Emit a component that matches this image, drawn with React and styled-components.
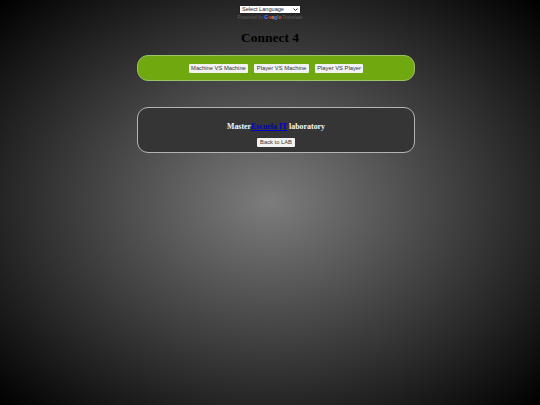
import React from 'react';
import styled, { createGlobalStyle } from 'styled-components';

const GlobalStyle = createGlobalStyle`
    html, body {
        margin: 0;
        padding: 0;
        height: 100%;
    }
    #root {
        height: 100%;
    }
`;

const Page = styled.div`
    width: 540px;
    height: 405px;
    overflow: hidden;
    display: flex;
    flex-direction: column;
    align-items: center;
    padding-top: 5px;
    box-sizing: border-box;
    background: radial-gradient(#7c7c7c, #000);
    font-family: "Liberation Serif", serif;
`;

const Translate = styled.div`
    display: flex;
    flex-direction: column;
    align-items: center;
`;

const LanguageSelect = styled.select`
    appearance: none;
    width: 62px;
    height: 9px;
    padding: 0 0 0 2px;
    border: 1px solid #222;
    border-radius: 0;
    background: #fff url("data:image/svg+xml,%3Csvg xmlns='http://www.w3.org/2000/svg' width='5' height='3'%3E%3Cpath d='M0.5 0.5L2.5 2.5L4.5 0.5' fill='none' stroke='%23222' stroke-width='1'/%3E%3C/svg%3E") no-repeat right 2px center;
    color: #222;
    font-family: "Liberation Sans", sans-serif;
    font-size: 5.6px;
    line-height: 7px;
`;

const Powered = styled.div`
    margin-top: 0;
    height: 6px;
    display: flex;
    align-items: center;
    gap: 1px;
    font-family: "Liberation Sans", sans-serif;
    font-size: 4.9px;
    color: #5c5c5c;
    white-space: nowrap;
`;

const GoogleLetter = styled.span`
    color: ${props => props.color};
    font-weight: bold;
    font-size: 4.9px;
`;

const Title = styled.h1`
    margin: 10px 0 0;
    font-size: 13.5px;
    line-height: 16px;
    font-weight: bold;
    color: #000;
`;

const Panel = styled.div`
    width: 278px;
    margin-left: 12px;
    box-sizing: border-box;
    border: 1px solid ${props => props.$green ? '#9cc26a' : '#b4b4b4'};
    border-radius: 11px;
    background: ${props => props.$green ? '#70a90f' : '#353535'};
    display: flex;
    flex-direction: column;
    align-items: center;
`;

const GamePanel = styled(Panel)`
    margin-top: 9px;
    height: 26px;
    flex-direction: row;
    justify-content: center;
    gap: 6px;
`;

const LabPanel = styled(Panel)`
    margin-top: 26px;
    height: 46px;
    padding-top: 13px;
`;

const Button = styled.button`
    height: 9px;
    padding: 0 2.5px;
    border: none;
    border-radius: 1px;
    background: #f2f2f2;
    color: #333;
    font-family: "Liberation Sans", sans-serif;
    font-size: 5.8px;
    line-height: 9px;
    white-space: nowrap;
`;

const BackButton = styled(Button)`
    margin-top: 6px;
    padding: 0 3px;
`;

const LabText = styled.div`
    font-size: 7.9px;
    line-height: 11px;
    font-weight: bold;
    color: #f5f5f5;
    white-space: nowrap;
`;

const LabLink = styled.a`
    color: #0000c8;
    text-decoration: underline;
`;

const googleLetters = [
    ['G', '#4285f4'],
    ['o', '#ea4335'],
    ['o', '#fbbc05'],
    ['g', '#4285f4'],
    ['l', '#34a853'],
    ['e', '#ea4335'],
];

export default function App() {
    return (
        <Page>
            <GlobalStyle />
            <Translate>
                <LanguageSelect defaultValue="">
                    <option value="">Select Language</option>
                </LanguageSelect>
                <Powered>
                    Powered by
                    <span>
                        {googleLetters.map(([letter, color], i) => (
                            <GoogleLetter key={i} color={color}>{letter}</GoogleLetter>
                        ))}
                    </span>
                    Translate
                </Powered>
            </Translate>
            <Title>Connect 4</Title>
            <GamePanel $green>
                <Button>Machine VS Machine</Button>
                <Button>Player VS Machine</Button>
                <Button>Player VS Player</Button>
            </GamePanel>
            <LabPanel>
                <LabText>
                    Master<LabLink href="#">Escuela IT</LabLink> laboratory
                </LabText>
                <BackButton>Back to LAB</BackButton>
            </LabPanel>
        </Page>
    );
}
